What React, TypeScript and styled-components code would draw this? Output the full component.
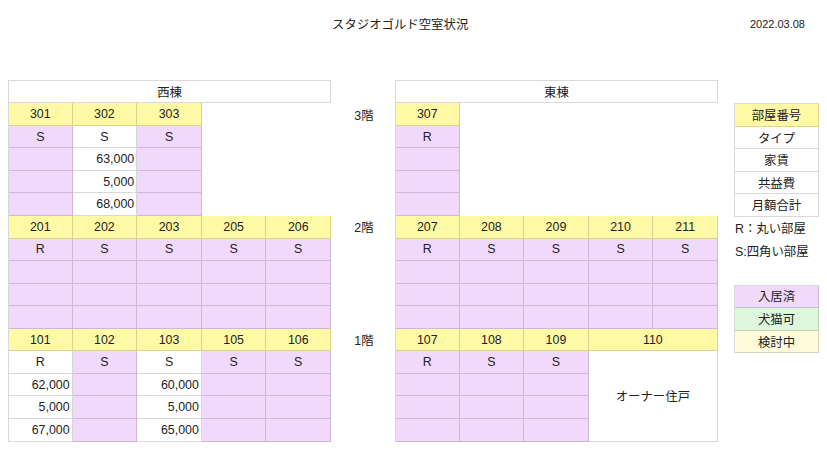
import React from 'react';
import styled, { createGlobalStyle } from 'styled-components';

const COL = 64.62;
const HEAD_H = 23.3;
const ROW_H = 22.56;
const LINE = 'rgba(0, 0, 0, 0.15)';

type Tone = 'room' | 'taken' | 'free' | 'pets' | 'pending';

const toneColor: Record<Tone, string> = {
  room: '#fff9a6',
  taken: '#f1d9fb',
  free: '#ffffff',
  pets: '#dcf7d9',
  pending: '#fffbdb',
};

const Global = createGlobalStyle`
  body {
    margin: 8px;
    background: #fff;
    color: #222;
    font-family: "Liberation Sans", "Noto Sans CJK JP", sans-serif;
  }
`;

const TitleBar = styled.header`
  display: flex;
  justify-content: space-between;
  align-items: center;
  height: 32px;
  padding: 0 14px 0 324px;
`;

const Title = styled.h1`
  margin: 0;
  font-size: 12.4px;
  font-weight: normal;
`;

const DateText = styled.span`
  font-size: 11px;
`;

const Sheet = styled.main`
  display: flex;
  align-items: flex-start;
  margin-top: 40px;
  font-size: 12.4px;
`;

const Building = styled.section`
  width: ${COL * 5}px;
  display: flex;
  flex-direction: column;
`;

const BuildingHead = styled.div`
  height: ${HEAD_H}px;
  box-sizing: border-box;
  border: 1px solid ${LINE};
  display: flex;
  align-items: center;
  justify-content: center;
`;

const Floor = styled.div`
  display: flex;
`;

const Unit = styled.div<{ $span?: number }>`
  width: ${(p) => COL * (p.$span ?? 1)}px;
  box-sizing: border-box;
  display: flex;
  flex-direction: column;
  &:first-child {
    border-left: 1px solid ${LINE};
  }
`;

const Cell = styled.div<{ $tone: Tone; $align?: 'center' | 'right'; $rows?: number }>`
  height: ${(p) => ROW_H * (p.$rows ?? 1)}px;
  box-sizing: border-box;
  border-right: 1px solid ${LINE};
  border-bottom: 1px solid ${LINE};
  background: ${(p) => toneColor[p.$tone]};
  display: flex;
  align-items: center;
  justify-content: ${(p) => (p.$align === 'right' ? 'flex-end' : 'center')};
  padding: 0 2px;
  white-space: nowrap;
`;

const FloorColumn = styled.div`
  width: ${COL}px;
  padding-top: ${HEAD_H}px;
  display: flex;
  flex-direction: column;
`;

const FloorLabel = styled.div`
  height: ${ROW_H * 5}px;
  & > span {
    display: flex;
    height: ${ROW_H}px;
    align-items: center;
    justify-content: center;
    padding-left: 2px;
  }
`;

const Legend = styled.aside`
  width: 86px;
  margin-left: 16px;
  padding-top: ${HEAD_H}px;
  display: flex;
  flex-direction: column;
`;

const KeyTable = styled.div`
  display: flex;
  flex-direction: column;
  border-top: 1px solid ${LINE};
  border-left: 1px solid ${LINE};
`;

const Note = styled.div`
  height: ${ROW_H}px;
  display: flex;
  align-items: center;
  padding-left: 1px;
  white-space: nowrap;
`;

const Spacer = styled.div`
  height: ${ROW_H}px;
`;

type UnitData = {
  no: string;
  type?: string;
  tone?: Tone;
  rent?: string;
  fee?: string;
  total?: string;
  owner?: boolean;
};

const U = (no: string, type: string, tone: Tone = 'taken', rent = '', fee = '', total = ''): UnitData => ({
  no,
  type,
  tone,
  rent,
  fee,
  total,
});

const west: UnitData[][] = [
  [U('301', 'S'), U('302', 'S', 'free', '63,000', '5,000', '68,000'), U('303', 'S')],
  [U('201', 'R'), U('202', 'S'), U('203', 'S'), U('205', 'S'), U('206', 'S')],
  [
    U('101', 'R', 'free', '62,000', '5,000', '67,000'),
    U('102', 'S'),
    U('103', 'S', 'free', '60,000', '5,000', '65,000'),
    U('105', 'S'),
    U('106', 'S'),
  ],
];

const east: UnitData[][] = [
  [U('307', 'R')],
  [U('207', 'R'), U('208', 'S'), U('209', 'S'), U('210', 'S'), U('211', 'S')],
  [U('107', 'R'), U('108', 'S'), U('109', 'S'), { no: '110', owner: true }],
];

const UnitView: React.FC<{ u: UnitData }> = ({ u }) => {
  if (u.owner) {
    return (
      <Unit $span={2}>
        <Cell $tone="room">{u.no}</Cell>
        <Cell $tone="free" $rows={4}>
          オーナー住戸
        </Cell>
      </Unit>
    );
  }
  const tone = u.tone ?? 'taken';
  return (
    <Unit>
      <Cell $tone="room">{u.no}</Cell>
      <Cell $tone={tone}>{u.type}</Cell>
      <Cell $tone={tone} $align="right">{u.rent}</Cell>
      <Cell $tone={tone} $align="right">{u.fee}</Cell>
      <Cell $tone={tone} $align="right">{u.total}</Cell>
    </Unit>
  );
};

const BuildingView: React.FC<{ name: string; floors: UnitData[][] }> = ({ name, floors }) => (
  <Building>
    <BuildingHead>{name}</BuildingHead>
    {floors.map((f, i) => (
      <Floor key={i}>
        {f.map((u) => (
          <UnitView key={u.no} u={u} />
        ))}
      </Floor>
    ))}
  </Building>
);

export default function App() {
  return (
    <>
      <Global />
      <TitleBar>
        <Title>スタジオゴルド空室状況</Title>
        <DateText>2022.03.08</DateText>
      </TitleBar>
      <Sheet>
        <BuildingView name="西棟" floors={west} />
        <FloorColumn>
          {['3階', '2階', '1階'].map((f) => (
            <FloorLabel key={f}>
              <span>{f}</span>
            </FloorLabel>
          ))}
        </FloorColumn>
        <BuildingView name="東棟" floors={east} />
        <Legend>
          <KeyTable>
            <Cell $tone="room">部屋番号</Cell>
            <Cell $tone="free">タイプ</Cell>
            <Cell $tone="free">家賃</Cell>
            <Cell $tone="free">共益費</Cell>
            <Cell $tone="free">月額合計</Cell>
          </KeyTable>
          <Note>R：丸い部屋</Note>
          <Note>S:四角い部屋</Note>
          <Spacer />
          <KeyTable>
            <Cell $tone="taken">入居済</Cell>
            <Cell $tone="pets">犬猫可</Cell>
            <Cell $tone="pending">検討中</Cell>
          </KeyTable>
        </Legend>
      </Sheet>
    </>
  );
}
